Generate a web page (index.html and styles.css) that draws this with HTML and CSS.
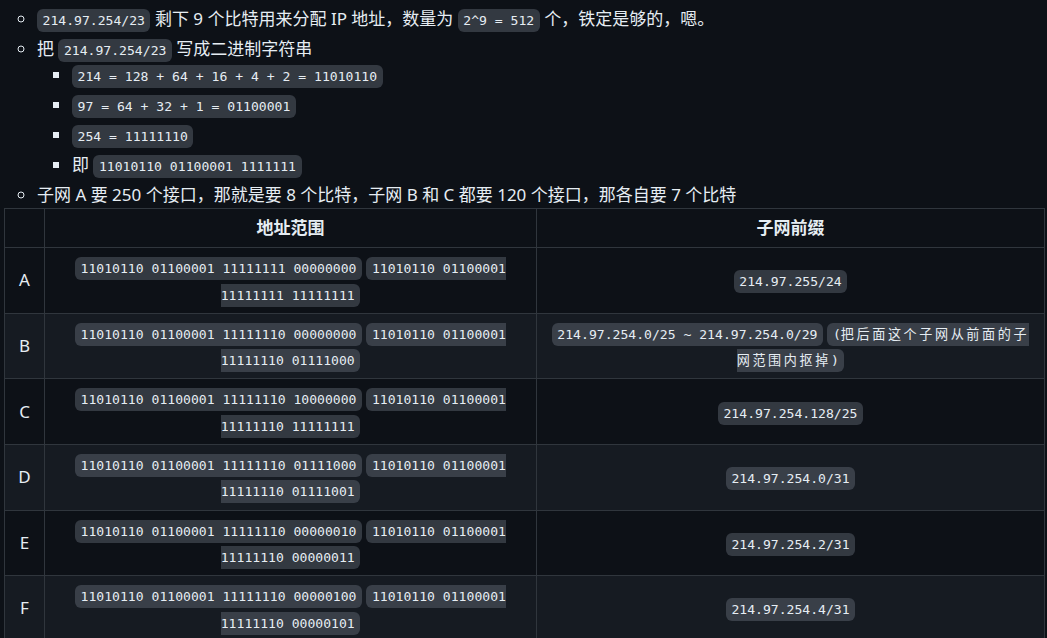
FILE: index.html
```html
<!DOCTYPE html>
<html lang="zh-CN">
<head>
<meta charset="utf-8">
<title>子网划分</title>
<link rel="stylesheet" href="styles.css">
</head>
<body>
<div class="markdown">
  <ul class="list">
    <li><code>214.97.254/23</code> 剩下 9 个比特用来分配 IP 地址，数量为 <code>2^9 = 512</code> 个，铁定是够的，嗯。</li>
    <li>把 <code>214.97.254/23</code> 写成二进制字符串
      <ul class="sublist">
        <li><code>214 = 128 + 64 + 16 + 4 + 2 = 11010110</code></li>
        <li><code>97 = 64 + 32 + 1 = 01100001</code></li>
        <li><code>254 = 11111110</code></li>
        <li>即 <code>11010110 01100001 1111111</code></li>
      </ul>
    </li>
    <li>子网 A 要 250 个接口，那就是要 8 个比特，子网 B 和 C 都要 120 个接口，那各自要 7 个比特</li>
  </ul>
  <table class="subnets">
    <colgroup>
      <col class="c-name">
      <col class="c-range">
      <col class="c-prefix">
    </colgroup>
    <thead>
      <tr><th></th><th>地址范围</th><th>子网前缀</th></tr>
    </thead>
    <tbody>
      <tr>
        <td>A</td>
        <td><code>11010110 01100001 11111111 00000000</code> <code>11010110 01100001 11111111 11111111</code></td>
        <td><code>214.97.255/24</code></td>
      </tr>
      <tr>
        <td>B</td>
        <td><code>11010110 01100001 11111110 00000000</code> <code>11010110 01100001 11111110 01111000</code></td>
        <td><code>214.97.254.0/25 ~ 214.97.254.0/29</code> <code>(<span class="cjk">把后面这个子网从前面的子网范围内抠掉</span>)</code></td>
      </tr>
      <tr>
        <td>C</td>
        <td><code>11010110 01100001 11111110 10000000</code> <code>11010110 01100001 11111110 11111111</code></td>
        <td><code>214.97.254.128/25</code></td>
      </tr>
      <tr>
        <td>D</td>
        <td><code>11010110 01100001 11111110 01111000</code> <code>11010110 01100001 11111110 01111001</code></td>
        <td><code>214.97.254.0/31</code></td>
      </tr>
      <tr>
        <td>E</td>
        <td><code>11010110 01100001 11111110 00000010</code> <code>11010110 01100001 11111110 00000011</code></td>
        <td><code>214.97.254.2/31</code></td>
      </tr>
      <tr>
        <td>F</td>
        <td><code>11010110 01100001 11111110 00000100</code> <code>11010110 01100001 11111110 00000101</code></td>
        <td><code>214.97.254.4/31</code></td>
      </tr>
    </tbody>
  </table>
</div>
</body>
</html>
```
FILE: styles.css
```css
html, body {
  margin: 0;
  padding: 0;
  background: #0d1117;
  overflow: hidden;
}

.markdown {
  padding: 6px 0 0 4px;
  color: #e6edf3;
  font-family: "Noto Sans", "Noto Sans CJK SC", sans-serif;
  font-size: 17px;
  line-height: 26px;
}

code {
  font-family: "DejaVu Sans Mono", "Noto Sans CJK SC", monospace;
  font-size: 13.1px;
  line-height: 1;
  padding: 4px 5.5px;
  border-radius: 6px;
  background: rgba(110, 118, 129, 0.4);
  color: #e6edf3;
}

.list {
  margin: 0;
  padding-left: 33px;
  list-style-type: circle;
}

.list > li + li {
  margin-top: 4px;
}

.sublist {
  margin: 0;
  padding-left: 35px;
  list-style-type: square;
}

.sublist > li + li {
  margin-top: 4px;
}

.subnets {
  border-collapse: collapse;
  border-spacing: 0;
  table-layout: fixed;
  width: 1040px;
  line-height: 26.3px;
}

.c-name { width: 40px; }
.c-range { width: 492px; }
.c-prefix { width: 508px; }

.subnets th,
.subnets td {
  border: 1px solid #30363d;
  padding: 6px 13px;
  text-align: center;
}

.subnets th {
  font-weight: 700;
}

.subnets tbody tr {
  background: #0d1117;
}

.subnets tbody tr:nth-child(2n) {
  background: #161b22;
}

.cjk {
  letter-spacing: 2.6px;
}
```
